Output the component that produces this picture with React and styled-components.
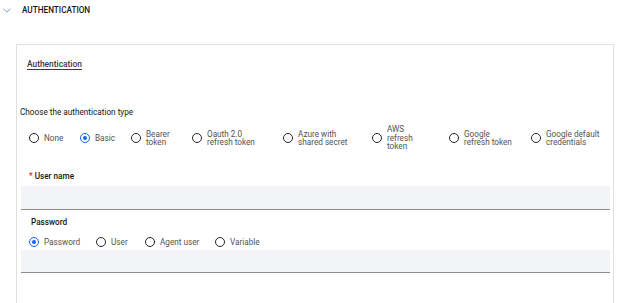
import React from "react";
import styled, { createGlobalStyle } from "styled-components";

const Global = createGlobalStyle`
  html, body { margin: 0; padding: 0; background: #ffffff; }
  body { font-family: Roboto, "Liberation Sans", Arial, sans-serif; color: #161616; }
  * { box-sizing: border-box; }
`;

const Page = styled.div`
  width: 624px;
  height: 303px;
  overflow: hidden;
`;

const Header = styled.div`
  display: flex;
  align-items: center;
  height: 20px;
  padding-left: 3px;
  gap: 11px;
`;

const HeaderTitle = styled.span`
  font-size: 8.2px;
  font-weight: 500;
  color: #161616;
  line-height: 10px;
`;

const Card = styled.div`
  margin: 24px 0 0 16px;
  width: 598px;
  min-height: 300px;
  border: 1px solid #e0e0e0;
  border-bottom: none;
  padding: 14px 3px 0 4px;
  display: flex;
  flex-direction: column;
`;

const SectionTitle = styled.span`
  align-self: flex-start;
  margin-left: 6px;
  font-size: 8.4px;
  font-weight: 500;
  line-height: 10px;
  color: #393939;
  text-decoration: underline;
  text-underline-offset: 1.5px;
`;

const Label = styled.div`
  font-size: 8.2px;
  line-height: 10px;
  color: #161616;
  margin-top: ${(p) => p.$mt}px;
  margin-left: ${(p) => p.$ml}px;
  font-weight: ${(p) => (p.$strong ? 500 : 400)};
`;

const Req = styled.span`
  color: #da1e28;
  margin-right: 2px;
`;

const RadioRow = styled.div`
  display: flex;
  align-items: center;
  margin-top: ${(p) => p.$mt}px;
  padding-left: 8px;
  min-height: ${(p) => p.$h}px;
`;

const Option = styled.label`
  display: flex;
  align-items: center;
  gap: 5px;
  width: ${(p) => (p.$w ? `${p.$w}px` : "auto")};
  flex: none;
`;

const Circle = styled.span`
  position: relative;
  flex: none;
  width: 10px;
  height: 10px;
  border-radius: 50%;
  border: 1.2px solid ${(p) => (p.$on ? "#0f62fe" : "#262626")};
  background: #fff;
  &::after {
    content: "";
    display: ${(p) => (p.$on ? "block" : "none")};
    position: absolute;
    left: 50%;
    top: 50%;
    width: 4.4px;
    height: 4.4px;
    margin: -2.2px 0 0 -2.2px;
    border-radius: 50%;
    background: #0f62fe;
  }
`;

const OptText = styled.span`
  font-size: 8.2px;
  line-height: 8.5px;
  color: #525252;
  white-space: nowrap;
`;

const Input = styled.div`
  margin-top: ${(p) => p.$mt}px;
  height: ${(p) => p.$h}px;
  background: #f2f4f8;
  border-bottom: 1px solid #8d8d8d;
  width: 589px;
`;

const Chevron = () => (
  <svg width="8" height="5" viewBox="0 0 8 5" fill="none">
    <path d="M0.5 0.6 L4 4.2 L7.5 0.6" stroke="#7c98c7" strokeWidth="1" />
  </svg>
);

const Radio = ({ lines, on, w }) => (
  <Option $w={w}>
    <Circle $on={on} />
    <OptText>
      {lines.map((l, i) => (
        <React.Fragment key={i}>
          {i > 0 && <br />}
          {l}
        </React.Fragment>
      ))}
    </OptText>
  </Option>
);

const authTypes = [
  { lines: ["None"], w: 51 },
  { lines: ["Basic"], w: 51, on: true },
  { lines: ["Bearer", "token"], w: 61 },
  { lines: ["Oauth 2.0", "refresh token"], w: 91 },
  { lines: ["Azure with", "shared secret"], w: 89 },
  { lines: ["AWS", "refresh", "token"], w: 77 },
  { lines: ["Google", "refresh token"], w: 82 },
  { lines: ["Google default", "credentials"] },
];

const pwTypes = [
  { lines: ["Password"], w: 67, on: true },
  { lines: ["User"], w: 49 },
  { lines: ["Agent user"], w: 70 },
  { lines: ["Variable"] },
];

export default function App() {
  return (
    <Page>
      <Global />
      <Header>
        <Chevron />
        <HeaderTitle>AUTHENTICATION</HeaderTitle>
      </Header>
      <Card>
        <SectionTitle>Authentication</SectionTitle>
        <Label $mt={38} $ml={-1}>Choose the authentication type</Label>
        <RadioRow $mt={8} $h={26}>
          {authTypes.map((t, i) => (
            <Radio key={i} {...t} />
          ))}
        </RadioRow>
        <Label $mt={20} $ml={8} $strong>
          <Req>*</Req>User name
        </Label>
        <Input $mt={5} $h={24} />
        <Label $mt={7} $ml={10} $strong>Password</Label>
        <RadioRow $mt={10} $h={10}>
          {pwTypes.map((t, i) => (
            <Radio key={i} {...t} />
          ))}
        </RadioRow>
        <Input $mt={3} $h={23} />
      </Card>
    </Page>
  );
}
